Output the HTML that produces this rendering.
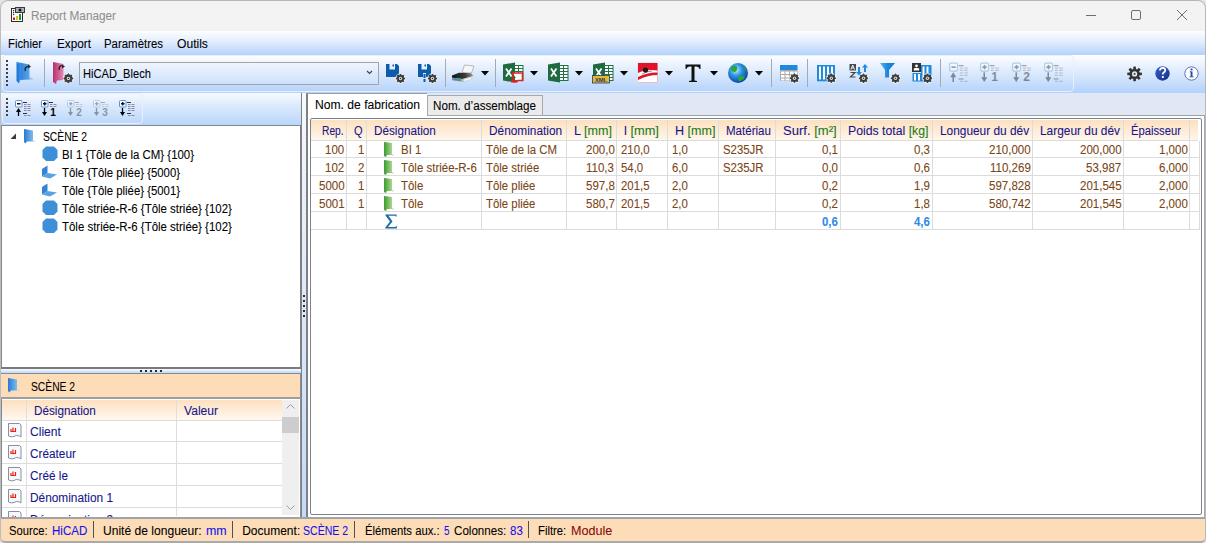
<!DOCTYPE html><html><head><meta charset="utf-8"><style>
*{box-sizing:border-box;margin:0;padding:0}
html,body{width:1206px;height:543px;overflow:hidden;background:#e6e6e6;font-family:"Liberation Sans",sans-serif;font-size:12px;color:#000}
.a{position:absolute}
.t{position:absolute;white-space:nowrap;line-height:14px;-webkit-text-stroke:0.08px currentColor}
.strip{position:absolute;border:1px solid #e9eef8;border-radius:4px}
.grip{position:absolute;width:2px;background:repeating-linear-gradient(#404040 0 2px,transparent 2px 4px)}
.sep{position:absolute;width:1px;background:#a2aab4}
.u{color:#1a7a1a}
</style></head><body>
<svg width="0" height="0" style="position:absolute"><defs><linearGradient id="gb" x1="0" x2="1"><stop offset="0" stop-color="#1b74d6"/><stop offset="1" stop-color="#5aa6ec"/></linearGradient><linearGradient id="gp" x1="0" x2="1"><stop offset="0" stop-color="#b8306a"/><stop offset="1" stop-color="#e888b8"/></linearGradient><linearGradient id="gf" x1="0" x2="1"><stop offset="0" stop-color="#2a78d0"/><stop offset="1" stop-color="#80bcee"/></linearGradient><linearGradient id="gg" x1="0" x2="1"><stop offset="0" stop-color="#3c9a30"/><stop offset="1" stop-color="#a8d890"/></linearGradient><linearGradient id="gfu" x1="0" x2="1"><stop offset="0" stop-color="#5ab4f0"/><stop offset=".5" stop-color="#1a88e0"/><stop offset="1" stop-color="#1478d0"/></linearGradient><radialGradient id="glo" cx=".4" cy=".35" r=".7"><stop offset="0" stop-color="#b8f0ff"/><stop offset=".45" stop-color="#2a90e0"/><stop offset="1" stop-color="#0c3a98"/></radialGradient></defs></svg>
<div style="position:absolute;left:0;top:0;width:1206px;height:543px;overflow:hidden;border-radius:8px 8px 5px 5px">
<div class="a" style="left:0;top:0;width:1206px;height:31px;background:#f3f3f3"></div>
<svg class="a" style="left:8px;top:4px;" width="20" height="20" viewBox="8 4 20 20">
  <rect x="11.5" y="8.5" width="11" height="13" fill="#fff" stroke="#2e2e2e"/>
  <rect x="15" y="7" width="10" height="6" fill="#3a3a3a"/>
  <rect x="16" y="8" width="8" height="4" fill="#a8b0b8"/>
  <circle cx="20" cy="10" r="1.5" fill="#111"/>
  <circle cx="13.6" cy="10.6" r=".75" fill="#333"/><circle cx="13.6" cy="12.6" r=".75" fill="#333"/><circle cx="13.6" cy="14.6" r=".75" fill="#333"/>
  <rect x="13" y="17.5" width="2" height="2.5" fill="#e01020"/>
  <rect x="16" y="16" width="2" height="4" fill="#e0b820"/>
  <rect x="19" y="14" width="2" height="6" fill="#10a020"/></svg>
<span class="t" style="left:31.00px;top:9px;color:#8f8f8f;transform:scaleX(0.9798);transform-origin:0 0;">Report Manager</span>
<div class="a" style="left:1086px;top:15px;width:10px;height:1px;background:#6e6e6e"></div>
<div class="a" style="left:1131px;top:10px;width:10px;height:10px;border:1px solid #6e6e6e;border-radius:2px"></div>
<svg class="a" style="left:1175px;top:9px;" width="13" height="13" viewBox="1175 9 13 13"><path d="M1177 10L1187 20M1187 10L1177 20" stroke="#6e6e6e" stroke-width="1"/></svg>
<div class="a" style="left:0;top:31px;width:1206px;height:24px;background:linear-gradient(#fdfeff,#e2edfd 45%,#b3d2fc)"></div>
<span class="t" style="left:8.00px;top:37px;transform:scaleX(0.9444);transform-origin:0 0;">Fichier</span>
<span class="t" style="left:57.00px;top:37px;transform:scaleX(0.9784);transform-origin:0 0;">Export</span>
<span class="t" style="left:104.00px;top:37px;transform:scaleX(0.9516);transform-origin:0 0;">Paramètres</span>
<span class="t" style="left:177.00px;top:37px;transform:scaleX(1.0081);transform-origin:0 0;">Outils</span>
<div class="a" style="left:0;top:55px;width:1206px;height:38px;background:linear-gradient(#fdfeff,#ebf3fe 25%,#d2e4fc 60%,#b2d1fc)"></div>
<div class="strip" style="left:2px;top:55px;width:1072px;height:37px"></div>
<div class="grip" style="left:6px;top:60px;height:26px"></div>
<div class="sep" style="left:44px;top:59px;height:28px"></div>
<div class="sep" style="left:445px;top:59px;height:28px"></div>
<div class="sep" style="left:495px;top:59px;height:28px"></div>
<div class="sep" style="left:771px;top:59px;height:28px"></div>
<div class="sep" style="left:807px;top:59px;height:28px"></div>
<div class="sep" style="left:940px;top:59px;height:28px"></div>
<div class="a" style="left:79px;top:62px;width:300px;height:23px;border:1px solid #a2a4a8;background:rgba(255,255,255,.12)"></div>
<span class="t" style="left:83.00px;top:67px;transform:scaleX(0.9252);transform-origin:0 0;">HiCAD_Blech</span>
<svg class="a" style="left:366px;top:70px;" width="8" height="6" viewBox="366 70 8 6"><path d="M367 71L369.5 73.5L372 71" fill="none" stroke="#444" stroke-width="1.2"/></svg>
<svg class="a" style="left:14px;top:60px;" width="22" height="26" viewBox="14 60 22 26">
<path d="M29 77L34 79L29 80Z" fill="#90a8c8" opacity=".6"/>
<path d="M16.5 62L29.5 64.5V79.5L20 80L19 83.5L16.5 81Z" fill="url(#gb)"/>
<path d="M17 63L20 63.5V82" stroke="#6ab0f0" stroke-width=".7" fill="none" opacity=".6"/>
<path d="M25.5 71a3 3 0 0 1 3-4.5" fill="none" stroke="#2a2a2a" stroke-width="1.6"/>
<path d="M28 64.5L31 66.5L28 68.5Z" fill="#2a2a2a"/></svg>
<svg class="a" style="left:50px;top:60px;" width="26" height="26" viewBox="50 60 26 26">
<path d="M53 62L63.5 64V80L57 80.5L56 84L53 82Z" fill="url(#gp)"/>
<path d="M59.5 70a3 3 0 0 1 3-4.5" fill="none" stroke="#2a2a2a" stroke-width="1.5"/>
<path d="M62 64.5L65 66.5L62 68.5Z" fill="#2a2a2a"/>
<circle cx="68.4" cy="78.4" r="5.6" fill="#fff" opacity=".6"/><polygon points="68.40,73.60 69.70,75.26 71.79,75.01 71.54,77.10 73.20,78.40 71.54,79.70 71.79,81.79 69.70,81.54 68.40,83.20 67.10,81.54 65.01,81.79 65.26,79.70 63.60,78.40 65.26,77.10 65.01,75.01 67.10,75.26" fill="#3a3a3a" stroke="#3a3a3a" stroke-width=".8" stroke-linejoin="round"/><circle cx="68.4" cy="78.4" r="1.7" fill="#e0e0e0"/><circle cx="68.4" cy="78.4" r=".7" fill="#333"/></svg>
<svg class="a" style="left:384px;top:62px;" width="24" height="24" viewBox="384 62 24 24">
<path d="M386 64H389.5V69.5H395V64H397L399 66V77H386Z" fill="#0d5cab"/>
<rect x="392.5" y="64.5" width="1.5" height="2" fill="#0d5cab"/><circle cx="400.5" cy="78.5" r="5.3999999999999995" fill="#fff" opacity=".6"/><polygon points="400.50,73.90 401.72,75.54 403.75,75.25 403.46,77.28 405.10,78.50 403.46,79.72 403.75,81.75 401.72,81.46 400.50,83.10 399.28,81.46 397.25,81.75 397.54,79.72 395.90,78.50 397.54,77.28 397.25,75.25 399.28,75.54" fill="#3a3a3a" stroke="#3a3a3a" stroke-width=".8" stroke-linejoin="round"/><circle cx="400.5" cy="78.5" r="1.7" fill="#e0e0e0"/><circle cx="400.5" cy="78.5" r=".7" fill="#333"/></svg>
<svg class="a" style="left:416px;top:62px;" width="24" height="24" viewBox="416 62 24 24">
<path d="M418 64H421.5V69.5H427V64H429L431 66V77H426V73H423V77H418Z" fill="#0d5cab"/>
<rect x="424.5" y="64.5" width="1.5" height="2" fill="#0d5cab"/>
<rect x="423.5" y="74" width="2" height="4" fill="#0d5cab"/><rect x="423.5" y="79" width="2" height="3" fill="#0d5cab"/><circle cx="432.5" cy="78.5" r="5.3999999999999995" fill="#fff" opacity=".6"/><polygon points="432.50,73.90 433.72,75.54 435.75,75.25 435.46,77.28 437.10,78.50 435.46,79.72 435.75,81.75 433.72,81.46 432.50,83.10 431.28,81.46 429.25,81.75 429.54,79.72 427.90,78.50 429.54,77.28 429.25,75.25 431.28,75.54" fill="#3a3a3a" stroke="#3a3a3a" stroke-width=".8" stroke-linejoin="round"/><circle cx="432.5" cy="78.5" r="1.7" fill="#e0e0e0"/><circle cx="432.5" cy="78.5" r=".7" fill="#333"/></svg>
<svg class="a" style="left:450px;top:63px;" width="26" height="20" viewBox="450 63 26 20">
<defs><linearGradient id="gpr" x1="0" x2="1"><stop offset="0" stop-color="#151515"/><stop offset=".6" stop-color="#3a3a3a"/><stop offset="1" stop-color="#9a9a9a"/></linearGradient>
<linearGradient id="gpb" x1="0" x2="1"><stop offset="0" stop-color="#8a8a8a"/><stop offset="1" stop-color="#e0e0e0"/></linearGradient></defs>
<path d="M464.5 65L474 66L471.5 73L462 72.5Z" fill="#f6f6f6" stroke="#a0a0a0" stroke-width=".7"/>
<path d="M452 75.5L459 72.8L471 73.3L473.5 76L462.5 79L452 77.8Z" fill="url(#gpr)"/>
<path d="M452 77.8L462.5 79L473.5 76V79L462.5 82L452 80.3Z" fill="url(#gpb)"/>
<path d="M454 78.2L461 79V81L454 80.1Z" fill="#2a8ae0"/><path d="M457.5 78.6L461 79V81L457.5 80.6Z" fill="#30b070"/>
<path d="M463.5 79.6L471 77.5V79.2L463.5 81.2Z" fill="#f4f4f4"/></svg>
<svg class="a" style="left:481px;top:71px;" width="8" height="5" viewBox="481 71 8 5"><path d="M481 71H489L485 75.5Z" fill="#000"/></svg>
<svg class="a" style="left:500px;top:60px;" width="26" height="26" viewBox="500 60 26 26"><rect x="514.5" y="65.5" width="8.5" height="15" fill="#fff" stroke="#217346" stroke-width="1"/><path d="M515 68.5H523M515 71.5H523M515 74.5H523M515 77.5H523M518.5 66V80" stroke="#217346" stroke-width="1"/><path d="M503 64.5L515 62.5V82.5L503 80.5Z" fill="#1d6b3f"/><path d="M506 68.5L511.5 76.5M511.5 68.5L506 76.5" stroke="#fff" stroke-width="1.8"/><path d="M512.5 73H522.5V80.5H517.5" fill="#fff" stroke="#e82020" stroke-width="1.6"/><path d="M513 73V81.5H518" fill="none" stroke="#e82020" stroke-width="1.6"/><path d="M511 81.5H517" stroke="#e82020" stroke-width="2"/></svg>
<svg class="a" style="left:530px;top:71px;" width="8" height="5" viewBox="530 71 8 5"><path d="M530 71H538L534 75.5Z" fill="#000"/></svg>
<svg class="a" style="left:545px;top:60px;" width="26" height="26" viewBox="545 60 26 26"><rect x="559.5" y="65.5" width="8.5" height="15" fill="#fff" stroke="#217346" stroke-width="1"/><path d="M560 68.5H568M560 71.5H568M560 74.5H568M560 77.5H568M563.5 66V80" stroke="#217346" stroke-width="1"/><path d="M548 64.5L560 62.5V82.5L548 80.5Z" fill="#1d6b3f"/><path d="M551 68.5L556.5 76.5M556.5 68.5L551 76.5" stroke="#fff" stroke-width="1.8"/></svg>
<svg class="a" style="left:575px;top:71px;" width="8" height="5" viewBox="575 71 8 5"><path d="M575 71H583L579 75.5Z" fill="#000"/></svg>
<svg class="a" style="left:590px;top:60px;" width="26" height="26" viewBox="590 60 26 26"><rect x="604.5" y="65.5" width="8.5" height="15" fill="#fff" stroke="#217346" stroke-width="1"/><path d="M605 68.5H613M605 71.5H613M605 74.5H613M605 77.5H613M608.5 66V80" stroke="#217346" stroke-width="1"/><path d="M593 64.5L605 62.5V82.5L593 80.5Z" fill="#1d6b3f"/><path d="M596 68.5L601.5 76.5M601.5 68.5L596 76.5" stroke="#fff" stroke-width="1.8"/><rect x="592.5" y="75.5" width="17" height="7.5" fill="#e8b830" stroke="#1e3a6e" stroke-width=".8"/><text x="601" y="81.6" font-size="5.8" text-anchor="middle" fill="#1e3a6e" font-family="Liberation Sans" font-weight="bold">XML</text></svg>
<svg class="a" style="left:620px;top:71px;" width="8" height="5" viewBox="620 71 8 5"><path d="M620 71H628L624 75.5Z" fill="#000"/></svg>
<svg class="a" style="left:636px;top:62px;" width="24" height="23" viewBox="636 62 24 23">
<rect x="637.5" y="62.5" width="20.5" height="20.5" fill="#ddd"/>
<rect x="638" y="63" width="19.5" height="19.5" fill="#e2122a"/>
<path d="M638 73Q646 68.5 657.5 70.5V82.5H638Z" fill="#fff"/>
<path d="M638 77Q648 72 657.5 72.5V75Q648 75 638 80Z" fill="#e2122a"/>
<path d="M642 74Q648 71 652 71" stroke="#444" stroke-width=".6" fill="none"/>
<circle cx="645.5" cy="70" r="2.6" fill="#1a1a1a"/></svg>
<svg class="a" style="left:665px;top:71px;" width="8" height="5" viewBox="665 71 8 5"><path d="M665 71H673L669 75.5Z" fill="#000"/></svg>
<svg class="a" style="left:684px;top:62px;" width="18" height="22" viewBox="684 62 18 22"><path d="M685.5 64.5H700.5V69H699.5Q699 66.5 696 66.5H694.5V80.5L697 81V82H689V81L691.5 80.5V66.5H690Q687 66.5 686.5 69H685.5Z" fill="#111"/></svg>
<svg class="a" style="left:710px;top:71px;" width="8" height="5" viewBox="710 71 8 5"><path d="M710 71H718L714 75.5Z" fill="#000"/></svg>
<svg class="a" style="left:726px;top:61px;" width="24" height="24" viewBox="726 61 24 24">
<circle cx="738" cy="73" r="10" fill="url(#glo)"/>
<path d="M731 67Q735 64 737 67Q738 70 735 72Q732 72 731 70Z M739 76Q743 75 745 77Q743 81 739 81Q737 79 739 76Z M743 66Q746 68 747 71Q745 71 743 66Z" fill="#28a838"/></svg>
<svg class="a" style="left:755px;top:71px;" width="8" height="5" viewBox="755 71 8 5"><path d="M755 71H763L759 75.5Z" fill="#000"/></svg>
<svg class="a" style="left:778px;top:62px;" width="24" height="24" viewBox="778 62 24 24">
<rect x="780" y="65" width="17.5" height="5" fill="#1e88e0"/>
<rect x="780" y="70" width="17.5" height="11" fill="#a8a8a8"/>
<path d="M781 71.5h3.5v2.5h-3.5zM785.5 71.5h3.5v2.5h-3.5zM790 71.5h3.5v2.5h-3.5zM794.5 71.5h2.5v2.5h-2.5zM781 75h3.5v2.5h-3.5zM785.5 75h3.5v2.5h-3.5zM790 75h3.5v2.5h-3.5zM794.5 75h2.5v2.5h-2.5zM781 78.5h3.5v2h-3.5zM785.5 78.5h3.5v2h-3.5zM790 78.5h3.5v2h-3.5z" fill="#fff"/>
<circle cx="794.5" cy="78.2" r="5.3999999999999995" fill="#fff" opacity=".6"/><polygon points="794.50,73.60 795.72,75.24 797.75,74.95 797.46,76.98 799.10,78.20 797.46,79.42 797.75,81.45 795.72,81.16 794.50,82.80 793.28,81.16 791.25,81.45 791.54,79.42 789.90,78.20 791.54,76.98 791.25,74.95 793.28,75.24" fill="#3a3a3a" stroke="#3a3a3a" stroke-width=".8" stroke-linejoin="round"/><circle cx="794.5" cy="78.2" r="1.7" fill="#e0e0e0"/><circle cx="794.5" cy="78.2" r=".7" fill="#333"/></svg>
<svg class="a" style="left:815px;top:62px;" width="24" height="24" viewBox="815 62 24 24">
<rect x="817" y="65" width="18" height="16.3" fill="#1e8ae0"/>
<path d="M819 66.5h2v13h-2zM823 66.5h2v13h-2zM827 66.5h2v13h-2zM831 66.5h2v13h-2z" fill="#fdf8f4"/>
<circle cx="831.3" cy="78.2" r="5.3999999999999995" fill="#fff" opacity=".6"/><polygon points="831.30,73.60 832.52,75.24 834.55,74.95 834.26,76.98 835.90,78.20 834.26,79.42 834.55,81.45 832.52,81.16 831.30,82.80 830.08,81.16 828.05,81.45 828.34,79.42 826.70,78.20 828.34,76.98 828.05,74.95 830.08,75.24" fill="#3a3a3a" stroke="#3a3a3a" stroke-width=".8" stroke-linejoin="round"/><circle cx="831.3" cy="78.2" r="1.7" fill="#e0e0e0"/><circle cx="831.3" cy="78.2" r=".7" fill="#333"/></svg>
<svg class="a" style="left:847px;top:62px;" width="24" height="24" viewBox="847 62 24 24">
<rect x="849.5" y="64" width="6.5" height="6.5" fill="#4a4a4a"/>
<path d="M851 69.5L852.7 65L854.5 69.5M851.6 68h2.2" stroke="#fff" stroke-width=".9" fill="none"/>
<path d="M850.5 72.5H855L850.5 77H855.5" stroke="#444" stroke-width="1.2" fill="none"/>
<path d="M859 67V74" stroke="#1e8ae0" stroke-width="2"/><path d="M856 72L859 75.5L862 72Z" fill="#1e8ae0"/>
<path d="M865 72V65.5" stroke="#1e8ae0" stroke-width="2"/><path d="M862 67.5L865 64L868 67.5Z" fill="#1e8ae0"/>
<circle cx="863.5" cy="78.3" r="5.3999999999999995" fill="#fff" opacity=".6"/><polygon points="863.50,73.70 864.72,75.34 866.75,75.05 866.46,77.08 868.10,78.30 866.46,79.52 866.75,81.55 864.72,81.26 863.50,82.90 862.28,81.26 860.25,81.55 860.54,79.52 858.90,78.30 860.54,77.08 860.25,75.05 862.28,75.34" fill="#3a3a3a" stroke="#3a3a3a" stroke-width=".8" stroke-linejoin="round"/><circle cx="863.5" cy="78.3" r="1.7" fill="#e0e0e0"/><circle cx="863.5" cy="78.3" r=".7" fill="#333"/></svg>
<svg class="a" style="left:878px;top:62px;" width="24" height="24" viewBox="878 62 24 24">
<path d="M880 63H895L889 70V77.5H885V70Z" fill="url(#gfu)"/>
<circle cx="895.5" cy="78.3" r="5.3999999999999995" fill="#fff" opacity=".6"/><polygon points="895.50,73.70 896.72,75.34 898.75,75.05 898.46,77.08 900.10,78.30 898.46,79.52 898.75,81.55 896.72,81.26 895.50,82.90 894.28,81.26 892.25,81.55 892.54,79.52 890.90,78.30 892.54,77.08 892.25,75.05 894.28,75.34" fill="#3a3a3a" stroke="#3a3a3a" stroke-width=".8" stroke-linejoin="round"/><circle cx="895.5" cy="78.3" r="1.7" fill="#e0e0e0"/><circle cx="895.5" cy="78.3" r=".7" fill="#333"/></svg>
<svg class="a" style="left:910px;top:62px;" width="26" height="24" viewBox="910 62 26 24">
<rect x="912.5" y="73" width="9" height="8.5" fill="#1e8ae0"/>
<rect x="921" y="65" width="10.5" height="16.5" fill="#1e8ae0"/>
<path d="M914 74h2v6.5h-2zM918 74h2v6.5h-2zM922.5 66.5h2v13h-2zM926.5 66.5h2v13h-2z" fill="#fdf8f4"/>
<rect x="912" y="63" width="9" height="9" fill="#333"/>
<circle cx="916.5" cy="65.8" r="1.4" fill="#fff"/><path d="M913.8 70.5V68.5Q916.5 66.8 919.2 68.5V70.5Z" fill="#fff"/>
<circle cx="927.5" cy="78.3" r="5.3999999999999995" fill="#fff" opacity=".6"/><polygon points="927.50,73.70 928.72,75.34 930.75,75.05 930.46,77.08 932.10,78.30 930.46,79.52 930.75,81.55 928.72,81.26 927.50,82.90 926.28,81.26 924.25,81.55 924.54,79.52 922.90,78.30 924.54,77.08 924.25,75.05 926.28,75.34" fill="#3a3a3a" stroke="#3a3a3a" stroke-width=".8" stroke-linejoin="round"/><circle cx="927.5" cy="78.3" r="1.7" fill="#e0e0e0"/><circle cx="927.5" cy="78.3" r=".7" fill="#333"/></svg>
<svg class="a" style="left:949px;top:62px;opacity:.4" width="23" height="23" viewBox="949 62 19 19"><rect x="949.5" y="63.0" width="6.5" height="6.5" rx="1" fill="#fff" stroke="#5a92d8" stroke-width="1"/><path d="M951 66.25H954.5" stroke="#111" stroke-width="1.3"/><path d="M952.5 78.5V72.0" stroke="#000" stroke-width="1.3"/><path d="M950 74.5L952.5 70.5L955 74.5Z" fill="#000"/><path d="M957 65.0H961" stroke="#333" stroke-width="1"/><path d="M958 67.0h2.5M961.5 67.0h3" stroke="#8a8aa8" stroke-width="1"/><path d="M958 69.0h2.5M961.5 69.0h3" stroke="#8a8aa8" stroke-width="1"/><path d="M958 71.0h2.5M961.5 71.0h3" stroke="#8a8aa8" stroke-width="1"/><path d="M958 73.0h2.5M961.5 73.0h3" stroke="#8a8aa8" stroke-width="1"/><path d="M957 76.0H961" stroke="#333" stroke-width="1"/><path d="M958 78.0h2.5M961.5 78.0h3" stroke="#8a8aa8" stroke-width="1"/></svg>
<svg class="a" style="left:980px;top:62px;opacity:.4" width="23" height="23" viewBox="980 62 19 19"><rect x="980.5" y="63.0" width="6.5" height="6.5" rx="1" fill="#fff" stroke="#5a92d8" stroke-width="1"/><path d="M982 66.25H985.5" stroke="#111" stroke-width="1.3"/><path d="M983.75 64.5V68.0" stroke="#111" stroke-width="1.3"/><path d="M983.5 70.5V76.5" stroke="#000" stroke-width="1.3"/><path d="M981 74.5L983.5 78.5L986 74.5Z" fill="#000"/><path d="M988 65.0H992" stroke="#333" stroke-width="1"/><path d="M989 67.0h2.5M992.5 67.0h3" stroke="#8a8aa8" stroke-width="1"/><path d="M989 69.0h2.5M992.5 69.0h3" stroke="#8a8aa8" stroke-width="1"/><text x="992" y="78.0" font-size="10" text-anchor="middle" font-weight="bold" font-family="Liberation Sans" fill="#000">1</text></svg>
<svg class="a" style="left:1012px;top:62px;opacity:.4" width="23" height="23" viewBox="1012 62 19 19"><rect x="1012.5" y="63.0" width="6.5" height="6.5" rx="1" fill="#fff" stroke="#5a92d8" stroke-width="1"/><path d="M1014 66.25H1017.5" stroke="#111" stroke-width="1.3"/><path d="M1015.75 64.5V68.0" stroke="#111" stroke-width="1.3"/><path d="M1015.5 70.5V76.5" stroke="#000" stroke-width="1.3"/><path d="M1013 74.5L1015.5 78.5L1018 74.5Z" fill="#000"/><path d="M1020 65.0H1024" stroke="#333" stroke-width="1"/><path d="M1021 67.0h2.5M1024.5 67.0h3" stroke="#8a8aa8" stroke-width="1"/><path d="M1021 69.0h2.5M1024.5 69.0h3" stroke="#8a8aa8" stroke-width="1"/><text x="1024" y="78.0" font-size="10" text-anchor="middle" font-weight="bold" font-family="Liberation Sans" fill="#000">2</text></svg>
<svg class="a" style="left:1044px;top:62px;opacity:.4" width="23" height="23" viewBox="1044 62 19 19"><rect x="1044.5" y="63.0" width="6.5" height="6.5" rx="1" fill="#fff" stroke="#5a92d8" stroke-width="1"/><path d="M1046 66.25H1049.5" stroke="#111" stroke-width="1.3"/><path d="M1047.75 64.5V68.0" stroke="#111" stroke-width="1.3"/><path d="M1047.5 70.5V76.5" stroke="#000" stroke-width="1.3"/><path d="M1045 74.5L1047.5 78.5L1050 74.5Z" fill="#000"/><path d="M1052 65.0H1056" stroke="#333" stroke-width="1"/><path d="M1053 67.0h2.5M1056.5 67.0h3" stroke="#8a8aa8" stroke-width="1"/><path d="M1053 69.0h2.5M1056.5 69.0h3" stroke="#8a8aa8" stroke-width="1"/><path d="M1053 71.0h2.5M1056.5 71.0h3" stroke="#8a8aa8" stroke-width="1"/><path d="M1053 73.0h2.5M1056.5 73.0h3" stroke="#8a8aa8" stroke-width="1"/><path d="M1052 76.0H1056" stroke="#333" stroke-width="1"/><path d="M1053 78.0h2.5M1056.5 78.0h3" stroke="#8a8aa8" stroke-width="1"/></svg>
<svg class="a" style="left:1125px;top:64px;" width="20" height="20" viewBox="1125 64 20 20"><rect x="1133.3" y="66.6" width="2.6" height="3.2" fill="#333" transform="rotate(0 1134.6 73.9)"/><rect x="1133.3" y="66.6" width="2.6" height="3.2" fill="#333" transform="rotate(45 1134.6 73.9)"/><rect x="1133.3" y="66.6" width="2.6" height="3.2" fill="#333" transform="rotate(90 1134.6 73.9)"/><rect x="1133.3" y="66.6" width="2.6" height="3.2" fill="#333" transform="rotate(135 1134.6 73.9)"/><rect x="1133.3" y="66.6" width="2.6" height="3.2" fill="#333" transform="rotate(180 1134.6 73.9)"/><rect x="1133.3" y="66.6" width="2.6" height="3.2" fill="#333" transform="rotate(225 1134.6 73.9)"/><rect x="1133.3" y="66.6" width="2.6" height="3.2" fill="#333" transform="rotate(270 1134.6 73.9)"/><rect x="1133.3" y="66.6" width="2.6" height="3.2" fill="#333" transform="rotate(315 1134.6 73.9)"/><circle cx="1134.6" cy="73.9" r="5.2" fill="#333"/><circle cx="1134.6" cy="73.9" r="2.6" fill="#e4ecf8"/><circle cx="1134.6" cy="73.9" r="1.1" fill="#555"/></svg>
<svg class="a" style="left:1153px;top:64px;" width="20" height="20" viewBox="1153 64 20 20">
<defs><linearGradient id="ghl" x1="0" y1="0" x2="1" y2="1"><stop offset="0" stop-color="#3a60c8"/><stop offset="1" stop-color="#142e88"/></linearGradient></defs><circle cx="1162.5" cy="73.5" r="7.2" fill="url(#ghl)"/>
<path d="M1160 70.5Q1160 67.8 1162.7 67.8Q1165.3 67.8 1165.3 70.3Q1165.3 71.8 1163.6 72.6Q1162.8 73 1162.8 74.5" stroke="#fff" stroke-width="1.8" fill="none"/>
<rect x="1161.9" y="76" width="1.9" height="1.9" fill="#fff"/></svg>
<svg class="a" style="left:1183px;top:64px;" width="20" height="20" viewBox="1183 64 20 20">
<circle cx="1191.5" cy="73.5" r="6.7" fill="#fff" stroke="#5a78b8" stroke-width="1"/>
<rect x="1190.6" y="71.5" width="1.9" height="5" fill="#2a4aa0"/><rect x="1190.6" y="68.5" width="1.9" height="1.9" fill="#2a4aa0"/><rect x="1189.5" y="76.3" width="4" height="1" fill="#2a4aa0"/><rect x="1189.8" y="71.3" width="1.5" height="1" fill="#2a4aa0"/></svg>
<div class="a" style="left:0;top:93px;width:1206px;height:425px;background:#dfe8f4"></div>
<div class="a" style="left:1px;top:93px;width:301px;height:32px;background:linear-gradient(#f6faff,#dce9fc 40%,#b8d6fb)"></div>
<div class="strip" style="left:2px;top:93px;width:141px;height:31px"></div>
<div class="grip" style="left:6px;top:98px;height:20px"></div>
<svg class="a" style="left:14px;top:98px;opacity:1" width="22" height="20" viewBox="14 98 22 20"><rect x="15.5" y="100.5" width="6.5" height="6.5" rx="1" fill="#fff" stroke="#5a92d8" stroke-width="1"/><path d="M17 103.75H20.5" stroke="#111" stroke-width="1.3"/><path d="M18.5 116V109.5" stroke="#000" stroke-width="1.3"/><path d="M16 112L18.5 108L21 112Z" fill="#000"/><path d="M23 102.5H27" stroke="#333" stroke-width="1"/><path d="M24 104.5h2.5M27.5 104.5h3" stroke="#8a8aa8" stroke-width="1"/><path d="M24 106.5h2.5M27.5 106.5h3" stroke="#8a8aa8" stroke-width="1"/><path d="M24 108.5h2.5M27.5 108.5h3" stroke="#8a8aa8" stroke-width="1"/><path d="M24 110.5h2.5M27.5 110.5h3" stroke="#8a8aa8" stroke-width="1"/><path d="M23 113.5H27" stroke="#333" stroke-width="1"/><path d="M24 115.5h2.5M27.5 115.5h3" stroke="#8a8aa8" stroke-width="1"/></svg>
<svg class="a" style="left:40px;top:98px;opacity:1" width="22" height="20" viewBox="40 98 22 20"><rect x="41.5" y="100.5" width="6.5" height="6.5" rx="1" fill="#fff" stroke="#5a92d8" stroke-width="1"/><path d="M43 103.75H46.5" stroke="#111" stroke-width="1.3"/><path d="M44.75 102V105.5" stroke="#111" stroke-width="1.3"/><path d="M44.5 108V114" stroke="#000" stroke-width="1.3"/><path d="M42 112L44.5 116L47 112Z" fill="#000"/><path d="M49 102.5H53" stroke="#333" stroke-width="1"/><path d="M50 104.5h2.5M53.5 104.5h3" stroke="#8a8aa8" stroke-width="1"/><path d="M50 106.5h2.5M53.5 106.5h3" stroke="#8a8aa8" stroke-width="1"/><text x="53" y="115.5" font-size="10" text-anchor="middle" font-weight="bold" font-family="Liberation Sans" fill="#000">1</text></svg>
<svg class="a" style="left:66px;top:98px;opacity:.35" width="22" height="20" viewBox="66 98 22 20"><rect x="67.5" y="100.5" width="6.5" height="6.5" rx="1" fill="#fff" stroke="#5a92d8" stroke-width="1"/><path d="M69 103.75H72.5" stroke="#111" stroke-width="1.3"/><path d="M70.75 102V105.5" stroke="#111" stroke-width="1.3"/><path d="M70.5 108V114" stroke="#000" stroke-width="1.3"/><path d="M68 112L70.5 116L73 112Z" fill="#000"/><path d="M75 102.5H79" stroke="#333" stroke-width="1"/><path d="M76 104.5h2.5M79.5 104.5h3" stroke="#8a8aa8" stroke-width="1"/><path d="M76 106.5h2.5M79.5 106.5h3" stroke="#8a8aa8" stroke-width="1"/><text x="79" y="115.5" font-size="10" text-anchor="middle" font-weight="bold" font-family="Liberation Sans" fill="#000">2</text></svg>
<svg class="a" style="left:92px;top:98px;opacity:.35" width="22" height="20" viewBox="92 98 22 20"><rect x="93.5" y="100.5" width="6.5" height="6.5" rx="1" fill="#fff" stroke="#5a92d8" stroke-width="1"/><path d="M95 103.75H98.5" stroke="#111" stroke-width="1.3"/><path d="M96.75 102V105.5" stroke="#111" stroke-width="1.3"/><path d="M96.5 108V114" stroke="#000" stroke-width="1.3"/><path d="M94 112L96.5 116L99 112Z" fill="#000"/><path d="M101 102.5H105" stroke="#333" stroke-width="1"/><path d="M102 104.5h2.5M105.5 104.5h3" stroke="#8a8aa8" stroke-width="1"/><path d="M102 106.5h2.5M105.5 106.5h3" stroke="#8a8aa8" stroke-width="1"/><text x="105" y="115.5" font-size="10" text-anchor="middle" font-weight="bold" font-family="Liberation Sans" fill="#000">3</text></svg>
<svg class="a" style="left:118px;top:98px;opacity:1" width="22" height="20" viewBox="118 98 22 20"><rect x="119.5" y="100.5" width="6.5" height="6.5" rx="1" fill="#fff" stroke="#5a92d8" stroke-width="1"/><path d="M121 103.75H124.5" stroke="#111" stroke-width="1.3"/><path d="M122.75 102V105.5" stroke="#111" stroke-width="1.3"/><path d="M122.5 108V114" stroke="#000" stroke-width="1.3"/><path d="M120 112L122.5 116L125 112Z" fill="#000"/><path d="M127 102.5H131" stroke="#333" stroke-width="1"/><path d="M128 104.5h2.5M131.5 104.5h3" stroke="#8a8aa8" stroke-width="1"/><path d="M128 106.5h2.5M131.5 106.5h3" stroke="#8a8aa8" stroke-width="1"/><path d="M128 108.5h2.5M131.5 108.5h3" stroke="#8a8aa8" stroke-width="1"/><path d="M128 110.5h2.5M131.5 110.5h3" stroke="#8a8aa8" stroke-width="1"/><path d="M127 113.5H131" stroke="#333" stroke-width="1"/><path d="M128 115.5h2.5M131.5 115.5h3" stroke="#8a8aa8" stroke-width="1"/></svg>
<div class="a" style="left:1px;top:125px;width:301px;height:244px;border:1px solid #828790;border-right:2px solid #7e7e7e;border-bottom:2px solid #7a7a7a;background:#fff"></div>
<svg class="a" style="left:8px;top:131px;" width="10" height="10" viewBox="8 131 10 10"><path d="M16 133.5V139H10.5Z" fill="#3c3c3c"/></svg>
<svg class="a" style="left:22px;top:127px;" width="16" height="18" viewBox="22 127 16 18"><path d="M24 129L33 130.5V141.5L27 141.5L25.5 143.5L24 142Z" fill="url(#gf)"/><path d="M33 140.5L36 141.5L33 142Z" fill="#c8d8e8"/></svg>
<span class="t" style="left:43.00px;top:130px;transform:scaleX(0.8585);transform-origin:0 0;">SCÈNE 2</span>
<svg class="a" style="left:40px;top:146px;" width="20" height="18" viewBox="40 146 20 18"><path d="M46.0 146.5H54.0L57.5 150.0V157.5L54.0 161.0H46.0L42.5 157.5V150.0Z" fill="#3d8fd8"/></svg>
<span class="t" style="left:62.00px;top:148px;transform:scaleX(0.9514);transform-origin:0 0;">BI 1 {Tôle de la CM} {100}</span>
<svg class="a" style="left:40px;top:164px;" width="20" height="18" viewBox="40 164 20 18"><path d="M42 169.0L47.5 165.5V173.0L42 176.5Z" fill="#3384d4"/><path d="M42 176.5L47.5 173.0L57 174.5L50 178.5Z" fill="#5aa2e2"/></svg>
<span class="t" style="left:62.00px;top:166px;transform:scaleX(0.9459);transform-origin:0 0;">Tôle {Tôle pliée} {5000}</span>
<svg class="a" style="left:40px;top:182px;" width="20" height="18" viewBox="40 182 20 18"><path d="M42 187.0L47.5 183.5V191.0L42 194.5Z" fill="#3384d4"/><path d="M42 194.5L47.5 191.0L57 192.5L50 196.5Z" fill="#5aa2e2"/></svg>
<span class="t" style="left:62.00px;top:184px;transform:scaleX(0.9459);transform-origin:0 0;">Tôle {Tôle pliée} {5001}</span>
<svg class="a" style="left:40px;top:200px;" width="20" height="18" viewBox="40 200 20 18"><path d="M46.0 200.5H54.0L57.5 204.0V211.5L54.0 215.0H46.0L42.5 211.5V204.0Z" fill="#3d8fd8"/></svg>
<span class="t" style="left:62.00px;top:202px;transform:scaleX(0.9537);transform-origin:0 0;">Tôle striée-R-6 {Tôle striée} {102}</span>
<svg class="a" style="left:40px;top:218px;" width="20" height="18" viewBox="40 218 20 18"><path d="M46.0 218.5H54.0L57.5 222.0V229.5L54.0 233.0H46.0L42.5 229.5V222.0Z" fill="#3d8fd8"/></svg>
<span class="t" style="left:62.00px;top:220px;transform:scaleX(0.9537);transform-origin:0 0;">Tôle striée-R-6 {Tôle striée} {102}</span>
<div class="a" style="left:1px;top:369px;width:301px;height:4px;background:linear-gradient(#fbfdff,#bcd7fa)"></div>
<div class="a" style="left:140px;top:370px;width:2px;height:2px;background:#2a2a2a"></div>
<div class="a" style="left:145px;top:370px;width:2px;height:2px;background:#2a2a2a"></div>
<div class="a" style="left:150px;top:370px;width:2px;height:2px;background:#2a2a2a"></div>
<div class="a" style="left:155px;top:370px;width:2px;height:2px;background:#2a2a2a"></div>
<div class="a" style="left:160px;top:370px;width:2px;height:2px;background:#2a2a2a"></div>
<div class="a" style="left:1px;top:373px;width:301px;height:26px;background:#fddcb8;border-top:1px solid #8a8a8a;border-bottom:2px solid #9e9e9e;border-right:2px solid #8a8a8a"></div>
<svg class="a" style="left:6px;top:376px;" width="16" height="18" viewBox="6 376 16 18"><path d="M8 378L17 379.5V390.5L11 390.5L9.5 392.5L8 391Z" fill="url(#gf)"/><path d="M17 389.5L20 390.5L17 391Z" fill="#c8d8e8"/></svg>
<span class="t" style="left:31.00px;top:380px;transform:scaleX(0.8585);transform-origin:0 0;">SCÈNE 2</span>
<div class="a" style="left:1px;top:399px;width:301px;height:118px;border-left:1px solid #828790;border-right:2px solid #8a8a8a;background:#fff"></div>
<div class="a" style="left:2px;top:400px;width:280px;height:20px;background:linear-gradient(#fde0c0,#fff8f0)"></div>
<div class="a" style="left:26px;top:400px;width:1px;height:116px;background:#dedede"></div>
<div class="a" style="left:176px;top:400px;width:1px;height:116px;background:#dedede"></div>
<span class="t" style="left:34.00px;top:404px;color:#16168a;transform:scaleX(0.9764);transform-origin:0 0;">Désignation</span>
<span class="t" style="left:184.00px;top:404px;color:#16168a;transform:scaleX(1.0074);transform-origin:0 0;">Valeur</span>
<div class="a" style="left:2px;top:420px;width:280px;height:1px;background:#dcdcdc"></div>
<svg class="a" style="left:6px;top:421px;" width="18" height="20" viewBox="6 421 18 20"><path d="M8.5 423.5H19.5L21 425V437L19.5 436Q16 434.5 14 436.5Q11 437.5 8.5 436Z" fill="#f4f8fc" stroke="#6a7488" stroke-width=".8"/><path d="M11 429V431.5H15.5V428M13 427.5V431.5" stroke="#f02010" stroke-width="1.2" fill="none"/></svg>
<span class="t" style="left:30.00px;top:425px;color:#16168a;transform:scaleX(1.0081);transform-origin:0 0;">Client</span>
<div class="a" style="left:2px;top:441px;width:280px;height:1px;background:#dcdcdc"></div>
<svg class="a" style="left:6px;top:443px;" width="18" height="20" viewBox="6 443 18 20"><path d="M8.5 445.5H19.5L21 447V459L19.5 458Q16 456.5 14 458.5Q11 459.5 8.5 458Z" fill="#f4f8fc" stroke="#6a7488" stroke-width=".8"/><path d="M11 451V453.5H15.5V450M13 449.5V453.5" stroke="#f02010" stroke-width="1.2" fill="none"/></svg>
<span class="t" style="left:30.00px;top:447px;color:#16168a;transform:scaleX(0.9840);transform-origin:0 0;">Créateur</span>
<div class="a" style="left:2px;top:463px;width:280px;height:1px;background:#dcdcdc"></div>
<svg class="a" style="left:6px;top:465px;" width="18" height="20" viewBox="6 465 18 20"><path d="M8.5 467.5H19.5L21 469V481L19.5 480Q16 478.5 14 480.5Q11 481.5 8.5 480Z" fill="#f4f8fc" stroke="#6a7488" stroke-width=".8"/><path d="M11 473V475.5H15.5V472M13 471.5V475.5" stroke="#f02010" stroke-width="1.2" fill="none"/></svg>
<span class="t" style="left:30.00px;top:469px;color:#16168a;transform:scaleX(0.9806);transform-origin:0 0;">Créé le</span>
<div class="a" style="left:2px;top:485px;width:280px;height:1px;background:#dcdcdc"></div>
<svg class="a" style="left:6px;top:487px;" width="18" height="20" viewBox="6 487 18 20"><path d="M8.5 489.5H19.5L21 491V503L19.5 502Q16 500.5 14 502.5Q11 503.5 8.5 502Z" fill="#f4f8fc" stroke="#6a7488" stroke-width=".8"/><path d="M11 495V497.5H15.5V494M13 493.5V497.5" stroke="#f02010" stroke-width="1.2" fill="none"/></svg>
<span class="t" style="left:30.00px;top:491px;color:#16168a;transform:scaleX(0.9881);transform-origin:0 0;">Dénomination 1</span>
<div class="a" style="left:2px;top:507px;width:280px;height:1px;background:#dcdcdc"></div>
<svg class="a" style="left:6px;top:509px;" width="18" height="20" viewBox="6 509 18 20"><path d="M8.5 511.5H19.5L21 513V525L19.5 524Q16 522.5 14 524.5Q11 525.5 8.5 524Z" fill="#f4f8fc" stroke="#6a7488" stroke-width=".8"/><path d="M11 517V519.5H15.5V516M13 515.5V519.5" stroke="#f02010" stroke-width="1.2" fill="none"/></svg>
<span class="t" style="left:30.00px;top:513px;color:#16168a;transform:scaleX(0.9881);transform-origin:0 0;">Dénomination 2</span>
<div class="a" style="left:282px;top:400px;width:17px;height:115px;background:#efefef"></div>
<svg class="a" style="left:285px;top:403px;" width="11" height="8" viewBox="285 403 11 8"><path d="M286.5 408.5L290.5 404.5L294.5 408.5" fill="none" stroke="#9a9a9a" stroke-width="1"/></svg>
<svg class="a" style="left:285px;top:503px;" width="11" height="8" viewBox="285 503 11 8"><path d="M286.5 505.5L290.5 509.5L294.5 505.5" fill="none" stroke="#9a9a9a" stroke-width="1"/></svg>
<div class="a" style="left:282px;top:417px;width:17px;height:16px;background:#cdcdcd"></div>
<div class="a" style="left:301px;top:93px;width:1px;height:425px;background:#808080"></div>
<div class="a" style="left:302px;top:93px;width:4px;height:425px;background:linear-gradient(#f6f9fe,#eef3fc 15%,#c2dafa)"></div>
<div class="a" style="left:303px;top:295px;width:2px;height:2px;background:#2a2a2a"></div>
<div class="a" style="left:303px;top:300px;width:2px;height:2px;background:#2a2a2a"></div>
<div class="a" style="left:303px;top:305px;width:2px;height:2px;background:#2a2a2a"></div>
<div class="a" style="left:303px;top:310px;width:2px;height:2px;background:#2a2a2a"></div>
<div class="a" style="left:303px;top:315px;width:2px;height:2px;background:#2a2a2a"></div>
<div class="a" style="left:306px;top:115px;width:899px;height:403px;background:#fff;border-left:2px solid #808080;border-top:1px solid #a0a0a0;border-right:1px solid #a8a8a8"></div>
<div class="a" style="left:427px;top:95px;width:116px;height:21px;background:#ebebeb;border:1px solid #a8a8a8"></div>
<span class="t" style="left:433.00px;top:99px;transform:scaleX(0.9717);transform-origin:0 0;">Nom. d’assemblage</span>
<div class="a" style="left:306px;top:93px;width:121px;height:25px;background:#fff;border:1px solid #a0a0a0;border-bottom:none;border-right:none;border-left:2px solid #808080"></div>
<span class="t" style="left:315.00px;top:98px;transform:scaleX(1.0096);transform-origin:0 0;">Nom. de fabrication</span>
<div class="a" style="left:310px;top:118px;width:892px;height:397px;border:1px solid #7a8290;border-radius:2px;background:#fff"></div>
<div class="a" style="left:311px;top:120px;width:887px;height:20px;background:linear-gradient(#fde0bf,#fff6ec)"></div>
<div class="a" style="left:346px;top:120px;width:1px;height:110px;background:#dcdcdc"></div>
<div class="a" style="left:366px;top:120px;width:1px;height:110px;background:#dcdcdc"></div>
<div class="a" style="left:481px;top:120px;width:1px;height:110px;background:#dcdcdc"></div>
<div class="a" style="left:566px;top:120px;width:1px;height:110px;background:#dcdcdc"></div>
<div class="a" style="left:616px;top:120px;width:1px;height:110px;background:#dcdcdc"></div>
<div class="a" style="left:667px;top:120px;width:1px;height:110px;background:#dcdcdc"></div>
<div class="a" style="left:718px;top:120px;width:1px;height:110px;background:#dcdcdc"></div>
<div class="a" style="left:775px;top:120px;width:1px;height:110px;background:#dcdcdc"></div>
<div class="a" style="left:840px;top:120px;width:1px;height:110px;background:#dcdcdc"></div>
<div class="a" style="left:932px;top:120px;width:1px;height:110px;background:#dcdcdc"></div>
<div class="a" style="left:1032px;top:120px;width:1px;height:110px;background:#dcdcdc"></div>
<div class="a" style="left:1123px;top:120px;width:1px;height:110px;background:#dcdcdc"></div>
<div class="a" style="left:1189px;top:120px;width:1px;height:110px;background:#dcdcdc"></div>
<div class="a" style="left:1199px;top:141px;width:1px;height:89px;background:#dcdcdc"></div>
<div class="a" style="left:311px;top:140px;width:887px;height:1px;background:#dcdcdc"></div>
<div class="a" style="left:311px;top:157px;width:889px;height:1px;background:#dcdcdc"></div>
<div class="a" style="left:311px;top:175px;width:889px;height:1px;background:#dcdcdc"></div>
<div class="a" style="left:311px;top:193px;width:889px;height:1px;background:#dcdcdc"></div>
<div class="a" style="left:311px;top:211px;width:889px;height:1px;background:#dcdcdc"></div>
<div class="a" style="left:311px;top:229px;width:889px;height:1px;background:#dcdcdc"></div>
<span class="t" style="left:322.00px;top:124px;color:#16168a;transform:scaleX(0.8515);transform-origin:0 0;">Rep.</span>
<span class="t" style="left:354.00px;top:124px;color:#16168a;transform:scaleX(0.9189);transform-origin:0 0;">Q</span>
<span class="t" style="left:374.00px;top:124px;color:#16168a;transform:scaleX(0.9764);transform-origin:0 0;">Désignation</span>
<span class="t" style="left:489.00px;top:124px;color:#16168a;transform:scaleX(0.9865);transform-origin:0 0;">Dénomination</span>
<span class="t" style="left:574.00px;top:124px;color:#16168a;transform:scaleX(1.0483);transform-origin:0 0">L <span class="u">[mm]</span></span>
<span class="t" style="left:624.00px;top:124px;color:#16168a;transform:scaleX(1.0687);transform-origin:0 0">l <span class="u">[mm]</span></span>
<span class="t" style="left:675.00px;top:124px;color:#16168a;transform:scaleX(1.0452);transform-origin:0 0">H <span class="u">[mm]</span></span>
<span class="t" style="left:726.00px;top:124px;color:#16168a;transform:scaleX(0.9626);transform-origin:0 0;">Matériau</span>
<span class="t" style="left:783.00px;top:124px;color:#16168a;transform:scaleX(1.0863);transform-origin:0 0">Surf. <span class="u">[m²]</span></span>
<span class="t" style="left:848.00px;top:124px;color:#16168a;transform:scaleX(1.0222);transform-origin:0 0">Poids total <span class="u">[kg]</span></span>
<span class="t" style="left:940.00px;top:124px;color:#16168a;transform:scaleX(0.9889);transform-origin:0 0;">Longueur du dév</span>
<span class="t" style="left:1040.00px;top:124px;color:#16168a;transform:scaleX(0.9907);transform-origin:0 0;">Largeur du dév</span>
<span class="t" style="left:1131.00px;top:124px;color:#16168a;transform:scaleX(0.9346);transform-origin:0 0;">Épaisseur</span>
<span class="t" style="left:325.30px;top:143px;color:#7a4414;transform:scaleX(0.9600);transform-origin:0 0;">100</span>
<span class="t" style="left:358.02px;top:143px;color:#7a4414;transform:scaleX(0.9600);transform-origin:0 0;">1</span>
<svg class="a" style="left:382px;top:140px;" width="14" height="18" viewBox="382 140 14 18"><path d="M384 142L392 143V155L387 155L386 157L384 156Z" fill="url(#gg)"/><path d="M392 154L394.5 155L392 155.5Z" fill="#c8ccc8"/></svg>
<span class="t" style="left:401.00px;top:143px;color:#7a4414;transform:scaleX(0.9550);transform-origin:0 0;">BI 1</span>
<span class="t" style="left:486.00px;top:143px;color:#7a4414;transform:scaleX(0.9500);transform-origin:0 0;">Tôle de la CM</span>
<span class="t" style="left:585.70px;top:143px;color:#7a4414;transform:scaleX(0.9600);transform-origin:0 0;">200,0</span>
<span class="t" style="left:621.00px;top:143px;color:#7a4414;transform:scaleX(0.9500);transform-origin:0 0;">210,0</span>
<span class="t" style="left:672.00px;top:143px;color:#7a4414;transform:scaleX(0.9500);transform-origin:0 0;">1,0</span>
<span class="t" style="left:723.00px;top:143px;color:#7a4414;transform:scaleX(0.9500);transform-origin:0 0;">S235JR</span>
<span class="t" style="left:822.42px;top:143px;color:#7a4414;transform:scaleX(0.9600);transform-origin:0 0;">0,1</span>
<span class="t" style="left:914.42px;top:143px;color:#7a4414;transform:scaleX(0.9600);transform-origin:0 0;">0,3</span>
<span class="t" style="left:988.74px;top:143px;color:#7a4414;transform:scaleX(0.9600);transform-origin:0 0;">210,000</span>
<span class="t" style="left:1079.74px;top:143px;color:#7a4414;transform:scaleX(0.9600);transform-origin:0 0;">200,000</span>
<span class="t" style="left:1158.70px;top:143px;color:#7a4414;transform:scaleX(0.9600);transform-origin:0 0;">1,000</span>
<span class="t" style="left:325.30px;top:161px;color:#7a4414;transform:scaleX(0.9600);transform-origin:0 0;">102</span>
<span class="t" style="left:358.02px;top:161px;color:#7a4414;transform:scaleX(0.9600);transform-origin:0 0;">2</span>
<svg class="a" style="left:382px;top:158px;" width="14" height="18" viewBox="382 158 14 18"><path d="M384 160L392 161V173L387 173L386 175L384 174Z" fill="url(#gg)"/><path d="M392 172L394.5 173L392 173.5Z" fill="#c8ccc8"/></svg>
<span class="t" style="left:401.00px;top:161px;color:#7a4414;transform:scaleX(0.9550);transform-origin:0 0;">Tôle striée-R-6</span>
<span class="t" style="left:486.00px;top:161px;color:#7a4414;transform:scaleX(0.9500);transform-origin:0 0;">Tôle striée</span>
<span class="t" style="left:586.42px;top:161px;color:#7a4414;transform:scaleX(0.9600);transform-origin:0 0;">110,3</span>
<span class="t" style="left:621.00px;top:161px;color:#7a4414;transform:scaleX(0.9500);transform-origin:0 0;">54,0</span>
<span class="t" style="left:672.00px;top:161px;color:#7a4414;transform:scaleX(0.9500);transform-origin:0 0;">6,0</span>
<span class="t" style="left:723.00px;top:161px;color:#7a4414;transform:scaleX(0.9500);transform-origin:0 0;">S235JR</span>
<span class="t" style="left:822.42px;top:161px;color:#7a4414;transform:scaleX(0.9600);transform-origin:0 0;">0,0</span>
<span class="t" style="left:914.42px;top:161px;color:#7a4414;transform:scaleX(0.9600);transform-origin:0 0;">0,6</span>
<span class="t" style="left:989.70px;top:161px;color:#7a4414;transform:scaleX(0.9600);transform-origin:0 0;">110,269</span>
<span class="t" style="left:1086.22px;top:161px;color:#7a4414;transform:scaleX(0.9600);transform-origin:0 0;">53,987</span>
<span class="t" style="left:1158.70px;top:161px;color:#7a4414;transform:scaleX(0.9600);transform-origin:0 0;">6,000</span>
<span class="t" style="left:318.82px;top:179px;color:#7a4414;transform:scaleX(0.9600);transform-origin:0 0;">5000</span>
<span class="t" style="left:358.02px;top:179px;color:#7a4414;transform:scaleX(0.9600);transform-origin:0 0;">1</span>
<svg class="a" style="left:382px;top:176px;" width="14" height="18" viewBox="382 176 14 18"><path d="M384 178L392 179V191L387 191L386 193L384 192Z" fill="url(#gg)"/><path d="M392 190L394.5 191L392 191.5Z" fill="#c8ccc8"/></svg>
<span class="t" style="left:401.00px;top:179px;color:#7a4414;transform:scaleX(0.9550);transform-origin:0 0;">Tôle</span>
<span class="t" style="left:486.00px;top:179px;color:#7a4414;transform:scaleX(0.9500);transform-origin:0 0;">Tôle pliée</span>
<span class="t" style="left:585.70px;top:179px;color:#7a4414;transform:scaleX(0.9600);transform-origin:0 0;">597,8</span>
<span class="t" style="left:621.00px;top:179px;color:#7a4414;transform:scaleX(0.9500);transform-origin:0 0;">201,5</span>
<span class="t" style="left:672.00px;top:179px;color:#7a4414;transform:scaleX(0.9500);transform-origin:0 0;">2,0</span>
<span class="t" style="left:822.42px;top:179px;color:#7a4414;transform:scaleX(0.9600);transform-origin:0 0;">0,2</span>
<span class="t" style="left:914.42px;top:179px;color:#7a4414;transform:scaleX(0.9600);transform-origin:0 0;">1,9</span>
<span class="t" style="left:988.74px;top:179px;color:#7a4414;transform:scaleX(0.9600);transform-origin:0 0;">597,828</span>
<span class="t" style="left:1079.74px;top:179px;color:#7a4414;transform:scaleX(0.9600);transform-origin:0 0;">201,545</span>
<span class="t" style="left:1158.70px;top:179px;color:#7a4414;transform:scaleX(0.9600);transform-origin:0 0;">2,000</span>
<span class="t" style="left:318.82px;top:197px;color:#7a4414;transform:scaleX(0.9600);transform-origin:0 0;">5001</span>
<span class="t" style="left:358.02px;top:197px;color:#7a4414;transform:scaleX(0.9600);transform-origin:0 0;">1</span>
<svg class="a" style="left:382px;top:194px;" width="14" height="18" viewBox="382 194 14 18"><path d="M384 196L392 197V209L387 209L386 211L384 210Z" fill="url(#gg)"/><path d="M392 208L394.5 209L392 209.5Z" fill="#c8ccc8"/></svg>
<span class="t" style="left:401.00px;top:197px;color:#7a4414;transform:scaleX(0.9550);transform-origin:0 0;">Tôle</span>
<span class="t" style="left:486.00px;top:197px;color:#7a4414;transform:scaleX(0.9500);transform-origin:0 0;">Tôle pliée</span>
<span class="t" style="left:585.70px;top:197px;color:#7a4414;transform:scaleX(0.9600);transform-origin:0 0;">580,7</span>
<span class="t" style="left:621.00px;top:197px;color:#7a4414;transform:scaleX(0.9500);transform-origin:0 0;">201,5</span>
<span class="t" style="left:672.00px;top:197px;color:#7a4414;transform:scaleX(0.9500);transform-origin:0 0;">2,0</span>
<span class="t" style="left:822.42px;top:197px;color:#7a4414;transform:scaleX(0.9600);transform-origin:0 0;">0,2</span>
<span class="t" style="left:914.42px;top:197px;color:#7a4414;transform:scaleX(0.9600);transform-origin:0 0;">1,8</span>
<span class="t" style="left:988.74px;top:197px;color:#7a4414;transform:scaleX(0.9600);transform-origin:0 0;">580,742</span>
<span class="t" style="left:1079.74px;top:197px;color:#7a4414;transform:scaleX(0.9600);transform-origin:0 0;">201,545</span>
<span class="t" style="left:1158.70px;top:197px;color:#7a4414;transform:scaleX(0.9600);transform-origin:0 0;">2,000</span>
<svg class="a" style="left:384px;top:213px;" width="14" height="17" viewBox="384 213 14 17"><path d="M385.5 214.5H396.5V216.5H395.5L395 215.8H388.5L392.5 221.5L388 227H395.5L396 226H396.8V228.5H385.3V227.5L390 221.5L385.5 215.5Z" fill="#1c6aa8"/></svg>
<span class="t" style="left:822.09px;top:215px;color:#2e8ae6;font-weight:bold;transform:scaleX(0.9500);transform-origin:0 0;">0,6</span>
<span class="t" style="left:914.09px;top:215px;color:#2e8ae6;font-weight:bold;transform:scaleX(0.9500);transform-origin:0 0;">4,6</span>
<div class="a" style="left:0;top:517px;width:1206px;height:26px;background:#fddcb8;border-top:2px solid #a0a3a8"></div>
<span class="t" style="left:9.00px;top:524px;color:#000;transform:scaleX(0.9333);transform-origin:0 0;">Source:</span>
<span class="t" style="left:52.30px;top:524px;color:#1212f0;transform:scaleX(0.9605);transform-origin:0 0;">HiCAD</span>
<span class="t" style="left:103.00px;top:524px;color:#000;transform:scaleX(1.0061);transform-origin:0 0;">Unité de longueur:</span>
<span class="t" style="left:205.60px;top:524px;color:#1212f0;transform:scaleX(1.0350);transform-origin:0 0;">mm</span>
<span class="t" style="left:242.20px;top:524px;color:#000;">Document:</span>
<span class="t" style="left:303.40px;top:524px;color:#1212f0;transform:scaleX(0.8780);transform-origin:0 0;">SCÈNE 2</span>
<span class="t" style="left:364.80px;top:524px;color:#000;transform:scaleX(0.9396);transform-origin:0 0;">Éléments aux.:</span>
<span class="t" style="left:443.80px;top:524px;color:#1212f0;transform:scaleX(0.8148);transform-origin:0 0;">5</span>
<span class="t" style="left:453.60px;top:524px;color:#000;transform:scaleX(0.9667);transform-origin:0 0;">Colonnes:</span>
<span class="t" style="left:510.00px;top:524px;color:#1212f0;transform:scaleX(0.9585);transform-origin:0 0;">83</span>
<span class="t" style="left:538.20px;top:524px;color:#000;transform:scaleX(0.9400);transform-origin:0 0;">Filtre:</span>
<span class="t" style="left:571.20px;top:524px;color:#880a0a;transform:scaleX(1.0497);transform-origin:0 0;">Module</span>
<div class="a" style="left:93px;top:521px;width:1px;height:17px;background:#505050"></div>
<div class="a" style="left:232px;top:521px;width:1px;height:17px;background:#505050"></div>
<div class="a" style="left:354px;top:521px;width:1px;height:17px;background:#505050"></div>
<div class="a" style="left:528px;top:521px;width:1px;height:17px;background:#505050"></div>
</div>
<div class="a" style="left:0;top:0;width:1206px;height:543px;border-left:1px solid #bdbdbd;border-top:1px solid #b6b6b6;border-right:1px solid #b8b8b8;border-bottom:2px solid #a9aaac;border-radius:8px 8px 5px 5px;pointer-events:none"></div>
</body></html>
